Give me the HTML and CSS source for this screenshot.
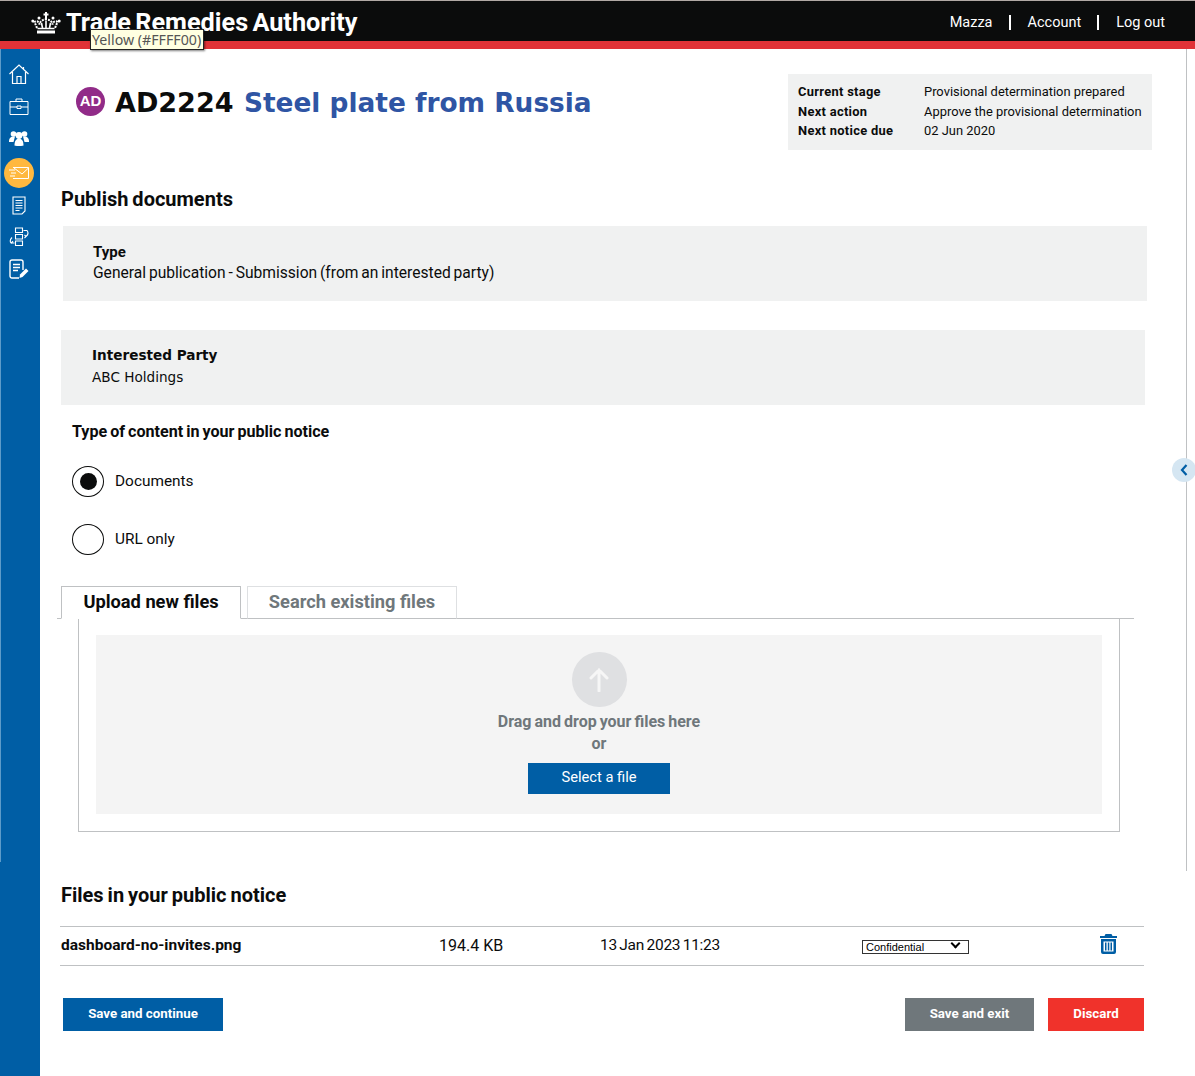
FILE: index.html
```html
<!DOCTYPE html>
<html lang="en">
<head>
    <meta charset="UTF-8">
    <meta name="viewport" content="width=device-width, initial-scale=1.0">
    <title>Trade Remedies Authority</title>
    <link rel="stylesheet" href="styles.css">
</head>
<body>
    <header class="topbar">
        <div class="brand">
            <svg class="crown" viewBox="0 0 30 22" width="30" height="22" fill="none" stroke="#fff">
                <path d="M15 0v7M12.500 2.500h5" stroke-width="2"/>
                <path d="M6 16 3.500 10c2-1.500 4.500-.5 5 2.500.5-3 3-5 6.500-5s6 2 6.500 5c.5-3 3-4 5-2.500L24 16" stroke-width="2" stroke-dasharray="2 1"/>
                <path d="M6.500 16.500h17" stroke-width="1.500"/>
                <path d="M6 20h18" stroke-width="3"/>
                <path d="M15 9v7M10.500 11l1 5M19.500 11l-1 5" stroke-width="1.600"/>
                <circle cx="1.800" cy="9" r="1.500" fill="#fff" stroke="none"/>
                <circle cx="28.200" cy="9" r="1.500" fill="#fff" stroke="none"/>
                <circle cx="8" cy="6" r="1.500" fill="#fff" stroke="none"/>
                <circle cx="22" cy="6" r="1.500" fill="#fff" stroke="none"/>
            </svg>
            <span class="brand-name">Trade Remedies Authority</span>
        </div>
        <nav class="topnav">
            <a>Mazza</a>
            <a>Account</a>
            <a>Log out</a>
        </nav>
    </header>
    <div class="tooltip">Yellow (#FFFF00)</div>

    <div class="page">
        <aside class="sidebar">
            <div class="side-icon">
                <svg viewBox="0 0 20 20" width="20" height="20" fill="none" stroke="#fff" stroke-width="1.200">
                    <path d="M.5 10 10 1l9.500 9M14.500 3V5.500M3.500 8v11.500h13V8M8 19.500v-7h4v7"/>
                </svg>
            </div>
            <div class="side-icon">
                <svg viewBox="0 0 20 17" width="20" height="17" fill="none" stroke="#fff" stroke-width="1">
                    <path d="M1 3.500h18v13H1zM1 9h7M12 9h7M7 3.500V1h6v2.500M8 8h4v2.500H8z"/>
                </svg>
            </div>
            <div class="side-icon">
                <svg viewBox="0 0 20 16" width="20" height="16" fill="#fff">
                    <circle cx="4.500" cy="4" r="2.800"/>
                    <circle cx="15.500" cy="4" r="2.800"/>
                    <path d="M0 11c0-3 2-4.500 4-4.500h2L4.500 12H0zM20 11c0-3-2-4.500-4-4.500h-2l1.500 5.500H20z"/>
                    <circle cx="10" cy="5.500" r="3.400"/>
                    <path d="M5.500 15.500c0-5 2-7 4.500-7s4.500 2 4.500 7c-1.500.700-7.500.700-9 0z"/>
                </svg>
            </div>
            <div class="side-icon side-icon-active">
                <svg viewBox="0 0 20 12" width="20" height="12" fill="none" stroke="#fff" stroke-width="1">
                    <path d="M4 .5h15.500v11H4M5 1l8 6 6.500-6M0 3h6M2 6h5M1 9h5"/>
                </svg>
            </div>
            <div class="side-icon">
                <svg viewBox="0 0 14 19" width="14" height="19" fill="none" stroke="#fff" stroke-width="1.100">
                    <path d="M1 1h12v14l-3 3H1zM3.500 4.500h7M3.500 7h7M3.500 9.500h7M3.500 12h7M3.500 14.500h4"/>
                </svg>
            </div>
            <div class="side-icon">
                <svg viewBox="0 0 20 20" width="20" height="20" fill="none" stroke="#fff" stroke-width="1.100">
                    <path d="M6.500 1h7v4.500h-7zM6.500 7.500h7V12h-7zM6.500 14h7v4.500h-7zM14.500 3.500H18c1.500 2 1.500 4-1 6M15.500 8l1.500 1.500-1.500 1.500M5.500 16H2C.5 14 1 12.500 3 10.500M1 14l1.500 2L4 14"/>
                </svg>
            </div>
            <div class="side-icon">
                <svg viewBox="0 0 20 20" width="20" height="20" fill="none" stroke="#fff" stroke-width="1.400">
                    <path d="M10 19H3a2 2 0 0 1-2-2V3a2 2 0 0 1 2-2h9a2 2 0 0 1 2 2v8M4 5.500h7M4 8.500h7M4 11.500h5"/>
                    <path d="m10.500 19 .5-3.500L17 9.500l2.500 2.500-6 6z" fill="#fff" stroke="none"/>
                </svg>
            </div>
        </aside>

        <main class="content">
            <section class="case-head">
                <div class="case-title">
                    <span class="case-badge">AD</span>
                    <h1><span class="case-ref">AD2224</span> <span class="case-name">Steel plate from Russia</span></h1>
                </div>
                <dl class="case-meta">
                    <dt>Current stage</dt><dd>Provisional determination prepared</dd>
                    <dt>Next action</dt><dd>Approve the provisional determination</dd>
                    <dt>Next notice due</dt><dd>02 Jun 2020</dd>
                </dl>
            </section>

            <h2 class="section-title">Publish documents</h2>

            <div class="info-box info-type">
                <strong>Type</strong>
                <span>General publication - Submission (from an interested party)</span>
            </div>
            <div class="info-box info-party">
                <strong>Interested Party</strong>
                <span>ABC Holdings</span>
            </div>

            <div class="content-type">
                <div class="field-label">Type of content in your public notice</div>
                <label class="radio-row"><span class="radio radio-on"></span><span class="radio-text">Documents</span></label>
                <label class="radio-row"><span class="radio"></span><span class="radio-text">URL only</span></label>
            </div>

            <div class="tabs">
                <div class="tab tab-active">Upload new files</div>
                <div class="tab">Search existing files</div>
            </div>
            <div class="tab-panel">
                <div class="dropzone">
                    <div class="drop-circle">
                        <svg viewBox="0 0 22 24" width="22" height="24" fill="none" stroke="#f6f6f6" stroke-width="3" stroke-linecap="round">
                            <path d="M11 23V2M3 10l8-8 8 8"/>
                        </svg>
                    </div>
                    <div class="drop-text">Drag and drop your files here</div>
                    <div class="drop-text drop-or">or</div>
                    <button class="btn btn-file">Select a file</button>
                </div>
            </div>

            <h2 class="section-title files-title">Files in your public notice</h2>
            <div class="file-row">
                <span class="file-name">dashboard-no-invites.png</span>
                <span class="file-size">194.4 KB</span>
                <span class="file-date">13 Jan 2023 11:23</span>
                <span class="file-select"><select><option>Confidential</option></select></span>
                <span class="file-delete">
                    <svg viewBox="0 0 17 20" width="17" height="20" fill="#005ea5">
                        <path d="M5.500 0h6l1 2H17v2H0V2h4.500z"/>
                        <path d="M1 5h15v13a2 2 0 0 1-2 2H3a2 2 0 0 1-2-2zm2.500 2.500V17.500h10V7.500zM5 8.500h1.500V16.500H5zM7.800 8.500h1.500V16.500H7.800zM10.500 8.500H12V16.500h-1.500z" fill-rule="evenodd"/>
                    </svg>
                </span>
            </div>

            <div class="actions">
                <button class="btn btn-save">Save and continue</button>
                <div class="actions-right">
                    <button class="btn btn-exit">Save and exit</button>
                    <button class="btn btn-discard">Discard</button>
                </div>
            </div>
        </main>
    </div>

    <div class="side-rule"></div>
    <div class="collapse-btn">
        <svg viewBox="0 0 8 12" width="8" height="12" fill="none" stroke="#005ea5" stroke-width="2.200">
            <path d="M6.500 1 2 6l4.500 5"/>
        </svg>
    </div>
</body>
</html>
```

FILE: styles.css
```css
body, html {
    margin: 0;
    padding: 0;
    font-family: 'Roboto', 'Liberation Sans', sans-serif;
    color: #0b0c0c;
    background-color: #fff;
}
.topbar {
    display: flex;
    justify-content: space-between;
    align-items: center;
    box-sizing: border-box;
    height: 49px;
    padding: 3px 30px 0 31px;
    background-color: #0b0c0c;
    border-top: 1px solid #b1a9a5;
    border-bottom: 8px solid #e13237;
    color: #fff;
}
.brand {
    display: flex;
    align-items: center;
    gap: 5px;
}
.brand-name {
    font-size: 25.250px;
    font-weight: 700;
    word-spacing: -2px;
}
.topnav {
    display: flex;
    font-size: 14.500px;
}
.topnav a {
    padding: 0 16px 0 17px;
    border-left: 2px solid #fff;
    line-height: 15px;
}
.topnav a:first-child {
    border-left: none;
}
.topnav a:last-child {
    padding-right: 0;
}
.tooltip {
    position: absolute;
    left: 90px;
    top: 29px;
    padding: 0 2px 0 1px;
    height: 19px;
    line-height: 19px;
    font-family: 'Noto Sans', sans-serif;
    font-size: 14.200px;
    color: #555;
    background-color: #ffffe1;
    border: 1px solid #222;
    box-shadow: 1px 1px 2px rgba(0, 0, 0, 0.5);
}

.page {
    display: flex;
    min-height: 1027px;
}
.sidebar {
    position: relative;
    flex: 0 0 40px;
    box-sizing: border-box;
    padding-top: 9px;
    background-color: #005ea5;
}
.sidebar::before {
    content: "";
    position: absolute;
    left: 0;
    top: 0;
    width: 1px;
    height: 813px;
    background-color: #5d9bc9;
}
.side-icon {
    display: flex;
    align-items: center;
    justify-content: center;
    width: 38px;
    height: 32px;
}
.side-icon-active {
    margin-top: 3px;
}
.side-icon-active::before {
    content: "";
    position: absolute;
    width: 30px;
    height: 30px;
    border-radius: 50%;
    background-color: #ffb83f;
}
.side-icon-active svg {
    position: relative;
}

.content {
    flex: 1;
    min-width: 0;
    padding-left: 21px;
    padding-right: 51px;
}
.case-head {
    display: flex;
    justify-content: space-between;
    align-items: flex-start;
    padding-top: 25px;
    margin-right: -8px;
}
.case-title {
    display: flex;
    align-items: center;
    gap: 10px;
    padding: 12px 0 0 15px;
}
.case-badge {
    width: 29px;
    height: 29px;
    line-height: 27px;
    margin-top: -3px;
    border-radius: 50%;
    text-align: center;
    font-family: 'Liberation Sans', sans-serif;
    font-size: 15px;
    font-weight: 700;
    color: #fff;
    background-color: #912b88;
}
.case-title h1 {
    margin: 0;
    font-family: 'DejaVu Sans', sans-serif;
    font-size: 27px;
    font-weight: 700;
    line-height: 34px;
}
.case-name {
    margin-left: 1px;
    font-size: 26.400px;
    color: #2f55a4;
}
.case-meta {
    display: grid;
    grid-template-columns: 126px 1fr;
    box-sizing: border-box;
    width: 364px;
    height: 76px;
    margin: 0;
    padding: 8px 10px;
    align-content: start;
    font-size: 12.900px;
    line-height: 19.500px;
    background-color: #f0f1f1;
}
.case-meta dt {
    font-weight: 700;
    letter-spacing: 0.3px;
}
.case-meta dd {
    margin: 0;
    white-space: nowrap;
}

.section-title {
    margin: 36px 0 0;
    font-size: 20px;
    font-weight: 700;
    line-height: 26px;
    word-spacing: -1px;
}
.info-box {
    display: flex;
    flex-direction: column;
    box-sizing: border-box;
    height: 75px;
    background-color: #f0f1f1;
}
.info-box strong {
    font-size: 15px;
}
.info-type {
    margin: 14px -3px 0 2px;
    padding: 16px 30px 0;
    font-size: 15.600px;
    line-height: 21px;
    word-spacing: -1px;
}
.info-party {
    margin: 29px -1px 0 0;
    padding: 14px 31px 0;
    font-family: 'DejaVu Sans', sans-serif;
    font-size: 13.600px;
    line-height: 22px;
}
.info-party strong {
    font-size: 13.600px;
}
.content-type {
    padding-left: 11px;
}
.field-label {
    margin-top: 17px;
    font-size: 16.100px;
    font-weight: 700;
    line-height: 20px;
    word-spacing: -1px;
}
.radio-row {
    display: flex;
    align-items: center;
    gap: 11px;
    height: 31px;
    font-size: 15.400px;
}
.radio-row:first-of-type {
    margin-top: 24px;
}
.radio-row + .radio-row {
    margin-top: 27px;
}
.radio-text {
    padding-bottom: 2px;
}
.radio {
    display: flex;
    align-items: center;
    justify-content: center;
    box-sizing: border-box;
    width: 32px;
    height: 31px;
    border: 1.500px solid #0b0c0c;
    border-radius: 50%;
}
.radio-on::before {
    content: "";
    width: 17px;
    height: 17px;
    border-radius: 50%;
    background-color: #0b0c0c;
}

.tabs {
    display: flex;
    gap: 6px;
    box-sizing: border-box;
    height: 33px;
    margin: 31px 10px 0 -4px;
    padding-left: 4px;
    border-bottom: 1px solid #bfc1c3;
}
.tab {
    box-sizing: border-box;
    width: 210px;
    height: 33px;
    line-height: 30px;
    text-align: center;
    font-size: 18.250px;
    font-weight: 700;
    color: #6f777b;
    border: 1px solid #dee0e2;
    border-bottom: 1px solid #bfc1c3;
}
.tab-active {
    width: 180px;
    color: #0b0c0c;
    border-color: #bfc1c3;
    border-bottom-color: #fff;
    background-color: #fff;
}
.tab-panel {
    box-sizing: border-box;
    height: 213px;
    margin: 0 24px 0 17px;
    padding: 16px 17px 17px;
    border: 1px solid #bfc1c3;
    border-top: none;
}
.dropzone {
    display: flex;
    flex-direction: column;
    align-items: center;
    height: 179px;
    padding-top: 17px;
    box-sizing: border-box;
    background-color: #f4f4f4;
}
.drop-circle {
    display: flex;
    align-items: center;
    justify-content: center;
    width: 55px;
    height: 55px;
    border-radius: 50%;
    background-color: #dfe0e2;
}
.drop-text {
    margin-top: 5px;
    font-size: 16px;
    font-weight: 700;
    line-height: 20px;
    color: #6f777b;
    word-spacing: -1px;
}
.drop-or {
    margin-top: 2px;
}
.btn {
    border: none;
    padding: 0 0 3px;
    font-family: inherit;
    color: #fff;
    font-weight: 700;
    font-size: 13.300px;
    cursor: pointer;
}
.btn-file {
    width: 142px;
    height: 31px;
    margin-top: 9px;
    font-size: 14.700px;
    font-weight: 400;
    background-color: #005ea5;
}
.files-title {
    margin-top: 50px;
    margin-left: 0;
}
.file-row {
    display: grid;
    grid-template-columns: 379px 161px 262px 1fr 44px;
    align-items: center;
    box-sizing: border-box;
    height: 40px;
    margin: 18px 0 0 -1px;
    padding-bottom: 2px;
    border-top: 1px solid #bfc1c3;
    border-bottom: 1px solid #bfc1c3;
    font-size: 16px;
}
.file-name {
    padding-left: 1px;
    font-size: 15.500px;
    font-weight: 700;
}
.file-date {
    font-size: 15.500px;
    letter-spacing: -0.3px;
    word-spacing: -1px;
}
.file-select {
    position: relative;
    padding-top: 4px;
}
.file-select::after {
    content: "";
    position: absolute;
    left: 90px;
    top: 4px;
    width: 5px;
    height: 5px;
    border-right: 2px solid #000;
    border-bottom: 2px solid #000;
    transform: rotate(45deg);
}
.file-select select {
    display: block;
    appearance: none;
    width: 107px;
    height: 14px;
    padding: 0 0 0 3px;
    font-family: 'Liberation Sans', sans-serif;
    font-size: 11px;
    color: #000;
    border: 1px solid #333;
    border-radius: 0;
    background-color: #fff;
}
.file-delete {
    display: flex;
    margin-top: -2px;
}
.actions {
    display: flex;
    justify-content: space-between;
    margin: 32px 0 0 2px;
}
.actions-right {
    display: flex;
    gap: 14px;
}
.btn-save {
    width: 160px;
    height: 33px;
    background-color: #005ea5;
}
.btn-exit {
    width: 129px;
    height: 33px;
    background-color: #6f777b;
}
.btn-discard {
    width: 96px;
    height: 33px;
    background-color: #f0322b;
}

.side-rule {
    position: absolute;
    left: 1186px;
    top: 49px;
    width: 1px;
    height: 822px;
    background-color: #bfc1c3;
}
.collapse-btn {
    position: absolute;
    left: 1172px;
    top: 458px;
    display: flex;
    align-items: center;
    justify-content: center;
    width: 24px;
    height: 24px;
    border-radius: 50%;
    background-color: #d5e6f2;
}
```
